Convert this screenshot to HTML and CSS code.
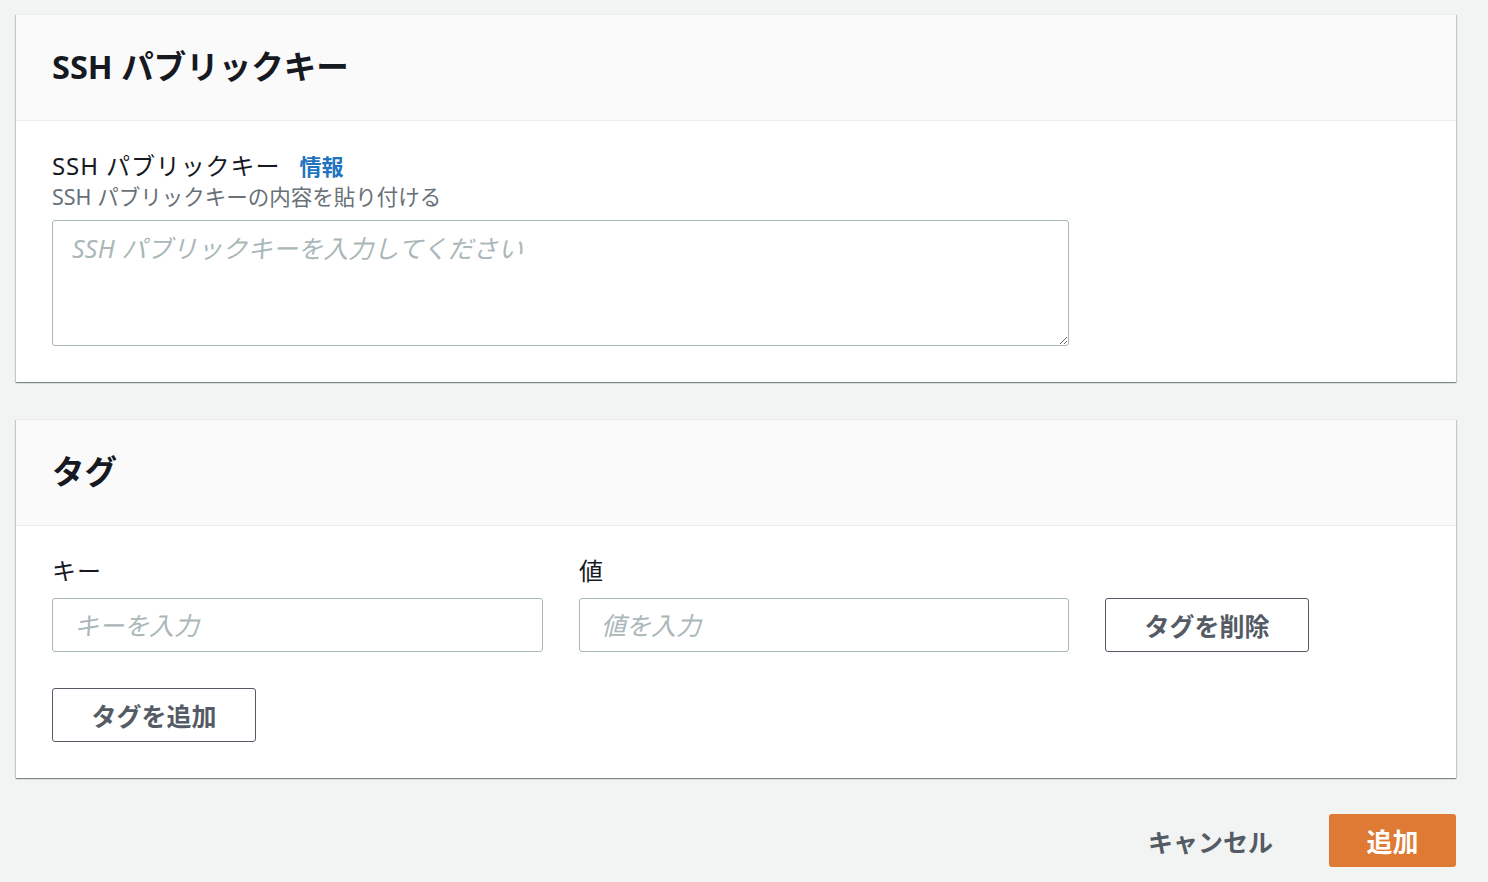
FILE: index.html
```html
<!DOCTYPE html>
<html lang="ja">
	<head>
		<meta charset="UTF-8" />
		<meta name="viewport" content="width=device-width, initial-scale=1.0" />
		<title>SSH パブリックキー</title>
		<link rel="stylesheet" href="styles.css">
	</head>
	<body>
		<main class="page">
			<section class="card">
				<div class="card-header">
					<h2>SSH パブリックキー</h2>
				</div>
				<div class="card-body">
					<div class="field-label">SSH パブリックキー <a class="info" href="#">情報</a></div>
					<div class="field-desc">SSH パブリックキーの内容を貼り付ける</div>
					<textarea class="key-area" placeholder="SSH パブリックキーを入力してください"></textarea>
				</div>
			</section>

			<section class="card">
				<div class="card-header">
					<h2>タグ</h2>
				</div>
				<div class="card-body">
					<div class="tag-row">
						<div class="tag-col">
							<div class="field-label">キー</div>
							<input class="text-input" type="text" placeholder="キーを入力" />
						</div>
						<div class="tag-col">
							<div class="field-label">値</div>
							<input class="text-input" type="text" placeholder="値を入力" />
						</div>
						<button class="btn">タグを削除</button>
					</div>
					<button class="btn add-tag">タグを追加</button>
				</div>
			</section>

			<div class="actions">
				<button class="btn-link">キャンセル</button>
				<button class="btn-primary">追加</button>
			</div>
		</main>
	</body>
</html>
```

FILE: styles.css
```css
* {
	padding: 0;
	margin: 0;
	box-sizing: border-box;
}
body {
	background-color: #f2f3f3;
	font-family: "Noto Sans", "Noto Sans CJK JP", sans-serif;
	color: #16191f;
}
.page {
	padding: 14px 32px 0 16px;
}
.card {
	background-color: #ffffff;
	border-top: 1px solid #eaeded;
	box-shadow: 0 1px 1px 0 rgba(0, 28, 36, 0.3), 1px 1px 1px 0 rgba(0, 28, 36, 0.15), -1px 1px 1px 0 rgba(0, 28, 36, 0.15);
	margin-bottom: 37px;
}
.card-header {
	background-color: #fafafa;
	border-bottom: 1px solid #eaeded;
	height: 106px;
	display: flex;
	align-items: center;
	padding: 0 36px;
}
.card-header h2 {
	font-size: 32.5px;
	font-weight: 700;
	line-height: 1;
	margin-top: -1px;
}
.card-body {
	padding: 29px 36px 36px;
}
.field-label {
	font-size: 24px;
	letter-spacing: 0.9px;
	line-height: 32px;
}
.info {
	color: #1f73c0;
	font-weight: 700;
	text-decoration: none;
	margin-left: 12px;
	font-size: 22px;
	letter-spacing: 0;
}
.field-desc {
	font-size: 21.5px;
	line-height: 30px;
	color: #687078;
	margin-bottom: 8px;
}
.key-area {
	display: block;
	width: 1017px;
	height: 126px;
	border: 1px solid #aab7b8;
	border-radius: 3px;
	padding: 8px 19px;
	font-family: inherit;
	font-size: 25px;
	letter-spacing: 0.2px;
	resize: vertical;
}
.key-area::placeholder,
.text-input::placeholder {
	color: #aab7b8;
	font-style: italic;
}
.tag-row {
	display: grid;
	grid-template-columns: 491px 490px 204px;
	column-gap: 36px;
	align-items: end;
	margin-bottom: 36px;
}
.tag-col .field-label {
	margin-bottom: 11px;
}
.text-input {
	display: block;
	width: 100%;
	height: 54px;
	border: 1px solid #aab7b8;
	border-radius: 3px;
	padding: 0 21px;
	font-family: inherit;
	font-size: 25px;
}
.btn {
	height: 54px;
	width: 204px;
	background-color: #ffffff;
	border: 1px solid #545b64;
	border-radius: 3px;
	color: #545b64;
	font-family: inherit;
	font-size: 25px;
	font-weight: 700;
}
.actions {
	display: flex;
	justify-content: flex-end;
	align-items: center;
	gap: 40px;
	margin-top: -1px;
}
.btn-link {
	background: none;
	border: none;
	color: #545b64;
	font-family: inherit;
	font-size: 25px;
	font-weight: 700;
	padding: 0 16px;
}
.btn-primary {
	width: 127px;
	height: 53px;
	background-color: #df7a35;
	border: none;
	border-radius: 3px;
	color: #ffffff;
	font-family: inherit;
	font-size: 26px;
	font-weight: 700;
}
```
